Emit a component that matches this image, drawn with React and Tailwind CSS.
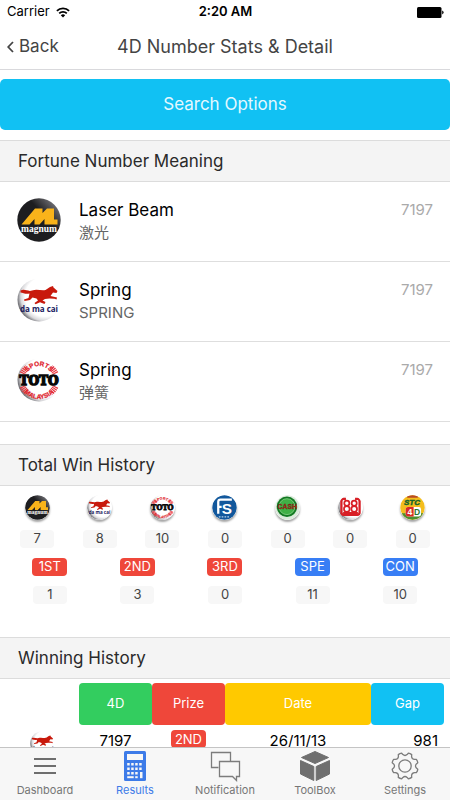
import React, { useId } from "react";

function MagnumLogo({ className }) {
  const id = useId();
  return (
    <svg viewBox="0 0 44 44" className={className} role="img" aria-label="Magnum">
      <defs>
        <linearGradient id={id} x1="0.9" y1="0.1" x2="0.6" y2="0.38">
          <stop offset="0" stopColor="#77777c" />
          <stop offset="1" stopColor="#1d1d20" />
        </linearGradient>
      </defs>
      <circle cx="22" cy="22" r="21.7" fill={`url(#${id})`} />
      <path d="M4.500 26.500 18 10.500H25.500V15L30 10.500H37V21.500H40.500V26.500H27.500V21L22.500 26.500H17.500V21L12.500 26.500Z" fill="#f9b31a" />
      <text x="22" y="33.500" textAnchor="middle" fontSize="9.500" fontWeight="700" fill="#fff" fontFamily="Liberation Serif, serif">magnum</text>
    </svg>
  );
}

function WhiteBall({ id }) {
  return (
    <>
      <defs>
        <radialGradient id={id} cx="0.64" cy="0.42" r="0.64">
          <stop offset="0.72" stopColor="#fff" />
          <stop offset="0.88" stopColor="#d9d9dc" />
          <stop offset="1" stopColor="#77777c" />
        </radialGradient>
      </defs>
      <circle cx="22" cy="22" r="21.5" fill={`url(#${id})`} />
    </>
  );
}

function DamacaiLogo({ className }) {
  const id = useId();
  return (
    <svg viewBox="0 0 44 44" className={className} role="img" aria-label="Da Ma Cai">
      <WhiteBall id={id} />
      <path
        d="M3.500 12.500C8 10.500 11 14 15 12.500C20 10.500 24 13 28.500 12L33 9 36 8 36.500 9.500 40.500 13 39.500 15 36 14.500 33.500 18 40 19.500 39.500 21.500 37.500 20.800 32.500 20.500 28 21 25.500 22.500 28.500 24 27.500 26 23 24.200 18.500 26.200 17.500 25 21 22.500 19.500 20.500 15.500 19.500 13 22 7.500 23 7 21.500 11.500 20 12.500 15.500C9 16.500 6 15 3.500 14.500Z"
        fill="#c8190c"
      />
      <text x="22" y="33.500" textAnchor="middle" fontSize="8" fontWeight="700" fill="#20205e" fontFamily="Open Sans, sans-serif">da ma cai</text>
    </svg>
  );
}

function TotoLogo({ className }) {
  const id = useId();
  return (
    <svg viewBox="0 0 44 44" className={className} role="img" aria-label="Sports Toto Malaysia">
      <WhiteBall id={id} />
      <path
        d="M5.500 15.500A16.500 16.500 0 0 1 10.300 9.500M38.500 15.500A16.500 16.500 0 0 0 33.700 9.500M5.500 28.500A16.500 16.500 0 0 0 10.300 34.500M38.500 28.500A16.500 16.500 0 0 1 33.700 34.500"
        fill="none"
        stroke="#e8333b"
        strokeWidth="6"
        strokeDasharray="1.200 0.600"
      />
      <path id={`${id}t`} d="M8 22A14 14 0 0 1 36 22" fill="none" />
      <path id={`${id}b`} d="M2.500 21.500A19.500 19.500 0 0 0 41.500 21.500" fill="none" />
      <g fontSize="6.500" fontWeight="700" fill="#e0222b" stroke="#e0222b" strokeWidth="0.200" fontFamily="Liberation Sans Narrow, Liberation Sans, sans-serif">
        <text>
          <textPath href={`#${id}t`} startOffset="50%" textAnchor="middle">SPORTS</textPath>
        </text>
        <text>
          <textPath href={`#${id}b`} startOffset="50%" textAnchor="middle">MALAYSIA</textPath>
        </text>
      </g>
      <text x="22" y="27" textAnchor="middle" fontSize="13.500" fontWeight="700" fill="#080808" stroke="#080808" strokeWidth="1.400" fontFamily="DejaVu Serif Condensed, DejaVu Serif, serif">TOTO</text>
    </svg>
  );
}

function SingaporeLogo({ className }) {
  return (
    <svg viewBox="0 0 44 44" className={className} role="img" aria-label="Singapore Pools">
      <circle cx="22" cy="22" r="21.500" fill="#12589c" />
      <path d="M11 33V12Q11 8 15 8H35M11 21H17" fill="none" stroke="#fff" strokeWidth="4" />
      <text x="26" y="34" textAnchor="middle" fontSize="27" fontWeight="700" fill="#fff" fontFamily="Liberation Sans, sans-serif">S</text>
      <path d="M12 38.500H32" stroke="#b8d4ec" strokeWidth="2" strokeDasharray="3 2" />
    </svg>
  );
}

function CashLogo({ className }) {
  return (
    <svg viewBox="0 0 44 44" className={className} role="img" aria-label="Cash Sweep">
      <circle cx="22" cy="22" r="21.500" fill="#dcebdc" />
      <circle cx="21" cy="20.500" r="18" fill="#147a24" />
      <circle cx="21" cy="20.500" r="14" fill="#3fb046" stroke="#84d184" strokeWidth="1.500" />
      <text x="21.500" y="25.500" textAnchor="middle" fontSize="12" fontWeight="700" fill="#d42c1e" stroke="#4b2010" strokeWidth="0.600" fontFamily="Liberation Sans, sans-serif">CASH</text>
    </svg>
  );
}

function EightyEightLogo({ className }) {
  const id = useId();
  return (
    <svg viewBox="0 0 44 44" className={className} role="img" aria-label="Sabah 88">
      <WhiteBall id={id} />
      <path d="M14 7H10Q6 7 6 11V31Q6 35 10 35H34Q38 35 38 31V11Q38 7 34 7H30" fill="none" stroke="#d81f26" strokeWidth="4" />
      <path d="M9 30H35V34H9Z" fill="#d81f26" />
      <g fill="#fff" stroke="#d81f26" strokeWidth="3">
        <circle cx="15.500" cy="14.500" r="4.500" />
        <circle cx="15.500" cy="24.500" r="5" />
        <circle cx="28.500" cy="14.500" r="4.500" />
        <circle cx="28.500" cy="24.500" r="5" />
      </g>
    </svg>
  );
}

function StcLogo({ className }) {
  return (
    <svg viewBox="0 0 44 44" className={className} role="img" aria-label="STC 4D">
      <circle cx="22" cy="22" r="21.500" fill="#f4bd1c" />
      <path d="M3 32A21.500 21.500 0 0 0 41 32Z" fill="#4c8f2f" />
      <path d="M12 3A21.500 21.500 0 0 1 32 3L31 5H13Z" fill="#b84a26" />
      <text x="21" y="18" textAnchor="middle" fontSize="14" fontWeight="700" fontStyle="italic" fill="#12642c" stroke="#12642c" strokeWidth="0.800" fontFamily="Liberation Sans, sans-serif">STC</text>
      <rect x="10" y="21" width="27" height="17" rx="4" fill="#fff" />
      <path d="M10 25Q10 21 14 21H24V38H14Q10 38 10 34Z" fill="#d92a26" />
      <text x="17.500" y="35" textAnchor="middle" fontSize="15" fontWeight="700" fill="#fff" fontFamily="Liberation Sans, sans-serif">4</text>
      <text x="30" y="35" textAnchor="middle" fontSize="15" fontWeight="700" fill="#27752e" fontFamily="Liberation Sans, sans-serif">D</text>
    </svg>
  );
}

function WifiIcon() {
  return (
    <svg width="14" height="11" viewBox="0 0 14 11" aria-hidden="true">
      <g fill="none" stroke="#000" strokeWidth="1.800">
        <path d="M0.900 3.900A8.600 8.600 0 0 1 13.100 3.900" />
        <path d="M3.200 6.400A5.400 5.400 0 0 1 10.800 6.400" />
      </g>
      <path d="M7 10.500 4.800 8.200A3.200 3.200 0 0 1 9.200 8.200Z" />
    </svg>
  );
}

function BatteryIcon() {
  return (
    <svg width="27" height="11" viewBox="0 0 27 11" aria-label="Battery full" role="img">
      <rect x="0" y="0" width="24.500" height="11" rx="1.500" />
      <path d="M25.200 3.600Q26.600 4.200 26.600 5.500T25.200 7.400Z" />
    </svg>
  );
}

function MenuIcon() {
  return (
    <svg width="32" height="32" viewBox="0 0 32 32" aria-hidden="true">
      <path d="M5 9H27M5 16H27M5 23H27" stroke="#6e6e6e" strokeWidth="2" />
    </svg>
  );
}

function CalculatorIcon() {
  const xs = [4, 8, 12, 16];
  return (
    <svg width="32" height="32" viewBox="-5 -1 32 32" aria-hidden="true">
      <rect width="22" height="30" rx="1.500" fill="#3d7be8" />
      <g fill="#f7f7f7">
        <rect x="3" y="3" width="16" height="6" />
        {[12, 16.5, 21].map((y) => xs.map((x) => (x === 16 && y === 21 ? null : <rect key={`${x}-${y}`} x={x - 0.8} y={y} width="2.500" height="2.500" />)))}
        <rect x="3.200" y="25.200" width="6.500" height="2" />
        <rect x="11.200" y="25.200" width="2.500" height="2" />
        <rect x="16" y="21" width="2.500" height="6.200" />
      </g>
    </svg>
  );
}

function ChatIcon() {
  return (
    <svg width="32" height="32" viewBox="0 0 32 32" aria-hidden="true">
      <g fill="none" stroke="#7c7c7c" strokeWidth="1.300">
        <path d="M9.500 17.500H2.500V2.500H21.500V11" />
        <path d="M10.500 11.500H30.500V26.500H27.500V30.500L23.500 26.500H10.500Z" />
      </g>
    </svg>
  );
}

function CubeIcon() {
  return (
    <svg width="32" height="32" viewBox="0 0 32 32" aria-hidden="true">
      <g fill="#6f6f6f" stroke="#6f6f6f" strokeWidth="1" strokeLinejoin="round">
        <path d="M16 1.500 29.500 7.500 16 13.500 2.500 7.500Z" />
        <path d="M1.500 10.500 14.800 16.500V30.500L1.500 24Z" />
        <path d="M30.500 10.500 17.200 16.500V30.500L30.500 24Z" />
      </g>
    </svg>
  );
}

function gearOutline() {
  const at = (r, deg) => {
    const a = ((deg - 90) * Math.PI) / 180;
    return `${(16 + r * Math.cos(a)).toFixed(2)} ${(16 + r * Math.sin(a)).toFixed(2)}`;
  };
  let d = "";
  for (let i = 0; i < 8; i++) {
    const c = i * 45 + 22.5;
    d += `${i ? "L" : "M"}${at(13.2, c - 8)}Q${at(13.6, c)} ${at(13.2, c + 8)}`;
    d += `L${at(11.6, c + 12)}Q${at(9.6, c + 22.5)} ${at(11.6, c + 33)}`;
  }
  return `${d}Z`;
}

function GearIcon() {
  return (
    <svg width="32" height="32" viewBox="0 0 32 32" aria-hidden="true">
      <g fill="none" stroke="#7c7c7c" strokeWidth="1.300" strokeLinejoin="round">
        <path d={gearOutline()} />
        <circle cx="16" cy="16" r="6.200" />
      </g>
    </svg>
  );
}

const meanings = [
  { Logo: MagnumLogo, title: "Laser Beam", sub: "激光", num: "7197" },
  { Logo: DamacaiLogo, title: "Spring", sub: "SPRING", num: "7197" },
  { Logo: TotoLogo, title: "Spring", sub: "弹簧", num: "7197" },
];

const operators = [
  { Logo: MagnumLogo, wins: 7 },
  { Logo: DamacaiLogo, wins: 8 },
  { Logo: TotoLogo, wins: 10 },
  { Logo: SingaporeLogo, wins: 0 },
  { Logo: CashLogo, wins: 0 },
  { Logo: EightyEightLogo, wins: 0 },
  { Logo: StcLogo, wins: 0 },
];

const prizes = [
  { label: "1ST", wins: 1, color: "bg-[#ef473a]" },
  { label: "2ND", wins: 3, color: "bg-[#ef473a]" },
  { label: "3RD", wins: 0, color: "bg-[#ef473a]" },
  { label: "SPE", wins: 11, color: "bg-[#387ef5]" },
  { label: "CON", wins: 10, color: "bg-[#387ef5]" },
];

const tabs = [
  { label: "Dashboard", Icon: MenuIcon },
  { label: "Results", Icon: CalculatorIcon, active: true },
  { label: "Notification", Icon: ChatIcon },
  { label: "ToolBox", Icon: CubeIcon },
  { label: "Settings", Icon: GearIcon },
];

function SectionTitle({ children }) {
  return (
    <h2 className="flex h-[42px] items-center border-y border-[#dcdcdc] bg-[#f4f4f4] px-[18px] pt-[2px] text-[17px] text-[#2a2a2a]">{children}</h2>
  );
}

function Count({ children }) {
  return <span className="flex h-[18px] w-[34px] items-center justify-center rounded bg-[#f7f7f7] text-[13px] text-[#444]">{children}</span>;
}

function Tag({ color, children }) {
  return <span className={`flex h-[18px] w-[35px] items-center justify-center rounded text-[13px] text-white ${color}`}>{children}</span>;
}

export default function App() {
  return (
    <div className="flex h-screen flex-col overflow-hidden bg-white font-['Inter','Noto_Sans_CJK_SC',sans-serif] text-black">
      <header className="shrink-0 border-b border-[#d9d9dc]">
        <div className="grid h-6 grid-cols-3 items-center pr-[6px] pl-[7px] text-[13px]">
          <span className="flex items-center gap-[6px]">
            Carrier
            <WifiIcon />
          </span>
          <span className="text-center font-semibold">2:20 AM</span>
          <span className="flex justify-end">
            <BatteryIcon />
          </span>
        </div>
        <div className="grid h-[45px] grid-cols-[1fr_auto_1fr] items-center px-[7px] text-[#444]">
          <button type="button" className="flex items-center gap-[5px] text-left text-[17px]">
            <svg width="7" height="12" viewBox="0 0 7 12" aria-hidden="true">
              <path d="M6 1 1.200 6 6 11" fill="none" stroke="#444" strokeWidth="1.800" />
            </svg>
            Back
          </button>
          <h1 className="text-[18px]">4D Number Stats &amp; Detail</h1>
        </div>
      </header>

      <main className="min-h-0 flex-1 overflow-hidden">
        <button type="button" className="mt-[9px] mb-[10px] flex h-[51px] w-full items-center justify-center rounded-[5px] bg-[#11c1f3] text-[17px] text-[#e4f8ff]">
          Search Options
        </button>

        <SectionTitle>Fortune Number Meaning</SectionTitle>
        <ul className="mb-[22px]">
          {meanings.map(({ Logo, title, sub, num }, i) => (
            <li key={i} className="flex items-start border-b border-[#dedede] px-[17px] pt-[16px] pb-[17px]">
              <Logo className="size-11 shrink-0" />
              <div className="ml-[18px] flex-1">
                <p className="text-[17px] leading-6">{title}</p>
                <p className="text-[15px] leading-[22px] text-[#666]">{sub}</p>
              </div>
              <span className="text-[15px] leading-6 text-[#aaa]">{num}</span>
            </li>
          ))}
        </ul>

        <SectionTitle>Total Win History</SectionTitle>
        <div className="px-[6px] pt-[9px]">
          <div className="grid grid-cols-7">
            {operators.map(({ Logo, wins }, i) => (
              <div key={i} className="flex flex-col items-center gap-[10px]">
                <Logo className="size-[25px] rounded-full shadow-[0_2px_2px_rgba(0,0,0,0.35)]" />
                <Count>{wins}</Count>
              </div>
            ))}
          </div>
          <div className="mt-[10px] grid grid-cols-5">
            {prizes.map(({ label, wins, color }) => (
              <div key={label} className="flex flex-col items-center gap-[10px]">
                <Tag color={color}>{label}</Tag>
                <Count>{wins}</Count>
              </div>
            ))}
          </div>
        </div>

        <div className="mt-[33px]">
          <SectionTitle>Winning History</SectionTitle>
        </div>
        <div className="px-[6px] pt-1">
          <table className="w-full table-fixed border-separate border-spacing-0 text-center">
            <colgroup>
              <col className="w-1/6" />
              <col className="w-1/6" />
              <col className="w-1/6" />
              <col className="w-1/3" />
              <col className="w-1/6" />
            </colgroup>
            <thead>
              <tr className="h-[42px] text-[13px] text-white">
                <td />
                <th scope="col" className="rounded bg-[#33cd5f] font-normal">4D</th>
                <th scope="col" className="rounded bg-[#ef473a] font-normal">Prize</th>
                <th scope="col" className="rounded bg-[#ffc900] font-normal">Date</th>
                <th scope="col" className="rounded bg-[#11c1f3] font-normal">Gap</th>
              </tr>
            </thead>
            <tbody>
              <tr className="text-[15px] leading-5">
                <td className="pt-[6px] align-top">
                  <DamacaiLogo className="mx-auto size-[25px]" />
                </td>
                <td className="pt-[6px] align-top">7197</td>
                <td className="pt-[5px] align-top">
                  <span className="flex justify-center">
                    <Tag color="bg-[#ef473a]">2ND</Tag>
                  </span>
                </td>
                <td className="pt-[6px] align-top">26/11/13</td>
                <td className="pt-[6px] pr-[6px] text-right align-top">981</td>
              </tr>
            </tbody>
          </table>
        </div>
      </main>

      <nav className="grid h-[53px] shrink-0 grid-cols-5 border-t border-[#c4c4c4] bg-[#f7f7f7]">
        {tabs.map(({ label, Icon, active }) => (
          <a
            key={label}
            href="#"
            aria-current={active ? "page" : undefined}
            className={`flex flex-col items-center pt-[2px] text-[11px] leading-4 ${active ? "text-[#3d7be8]" : "text-[#767676]"}`}
          >
            <Icon />
            {label}
          </a>
        ))}
      </nav>
    </div>
  );
}
